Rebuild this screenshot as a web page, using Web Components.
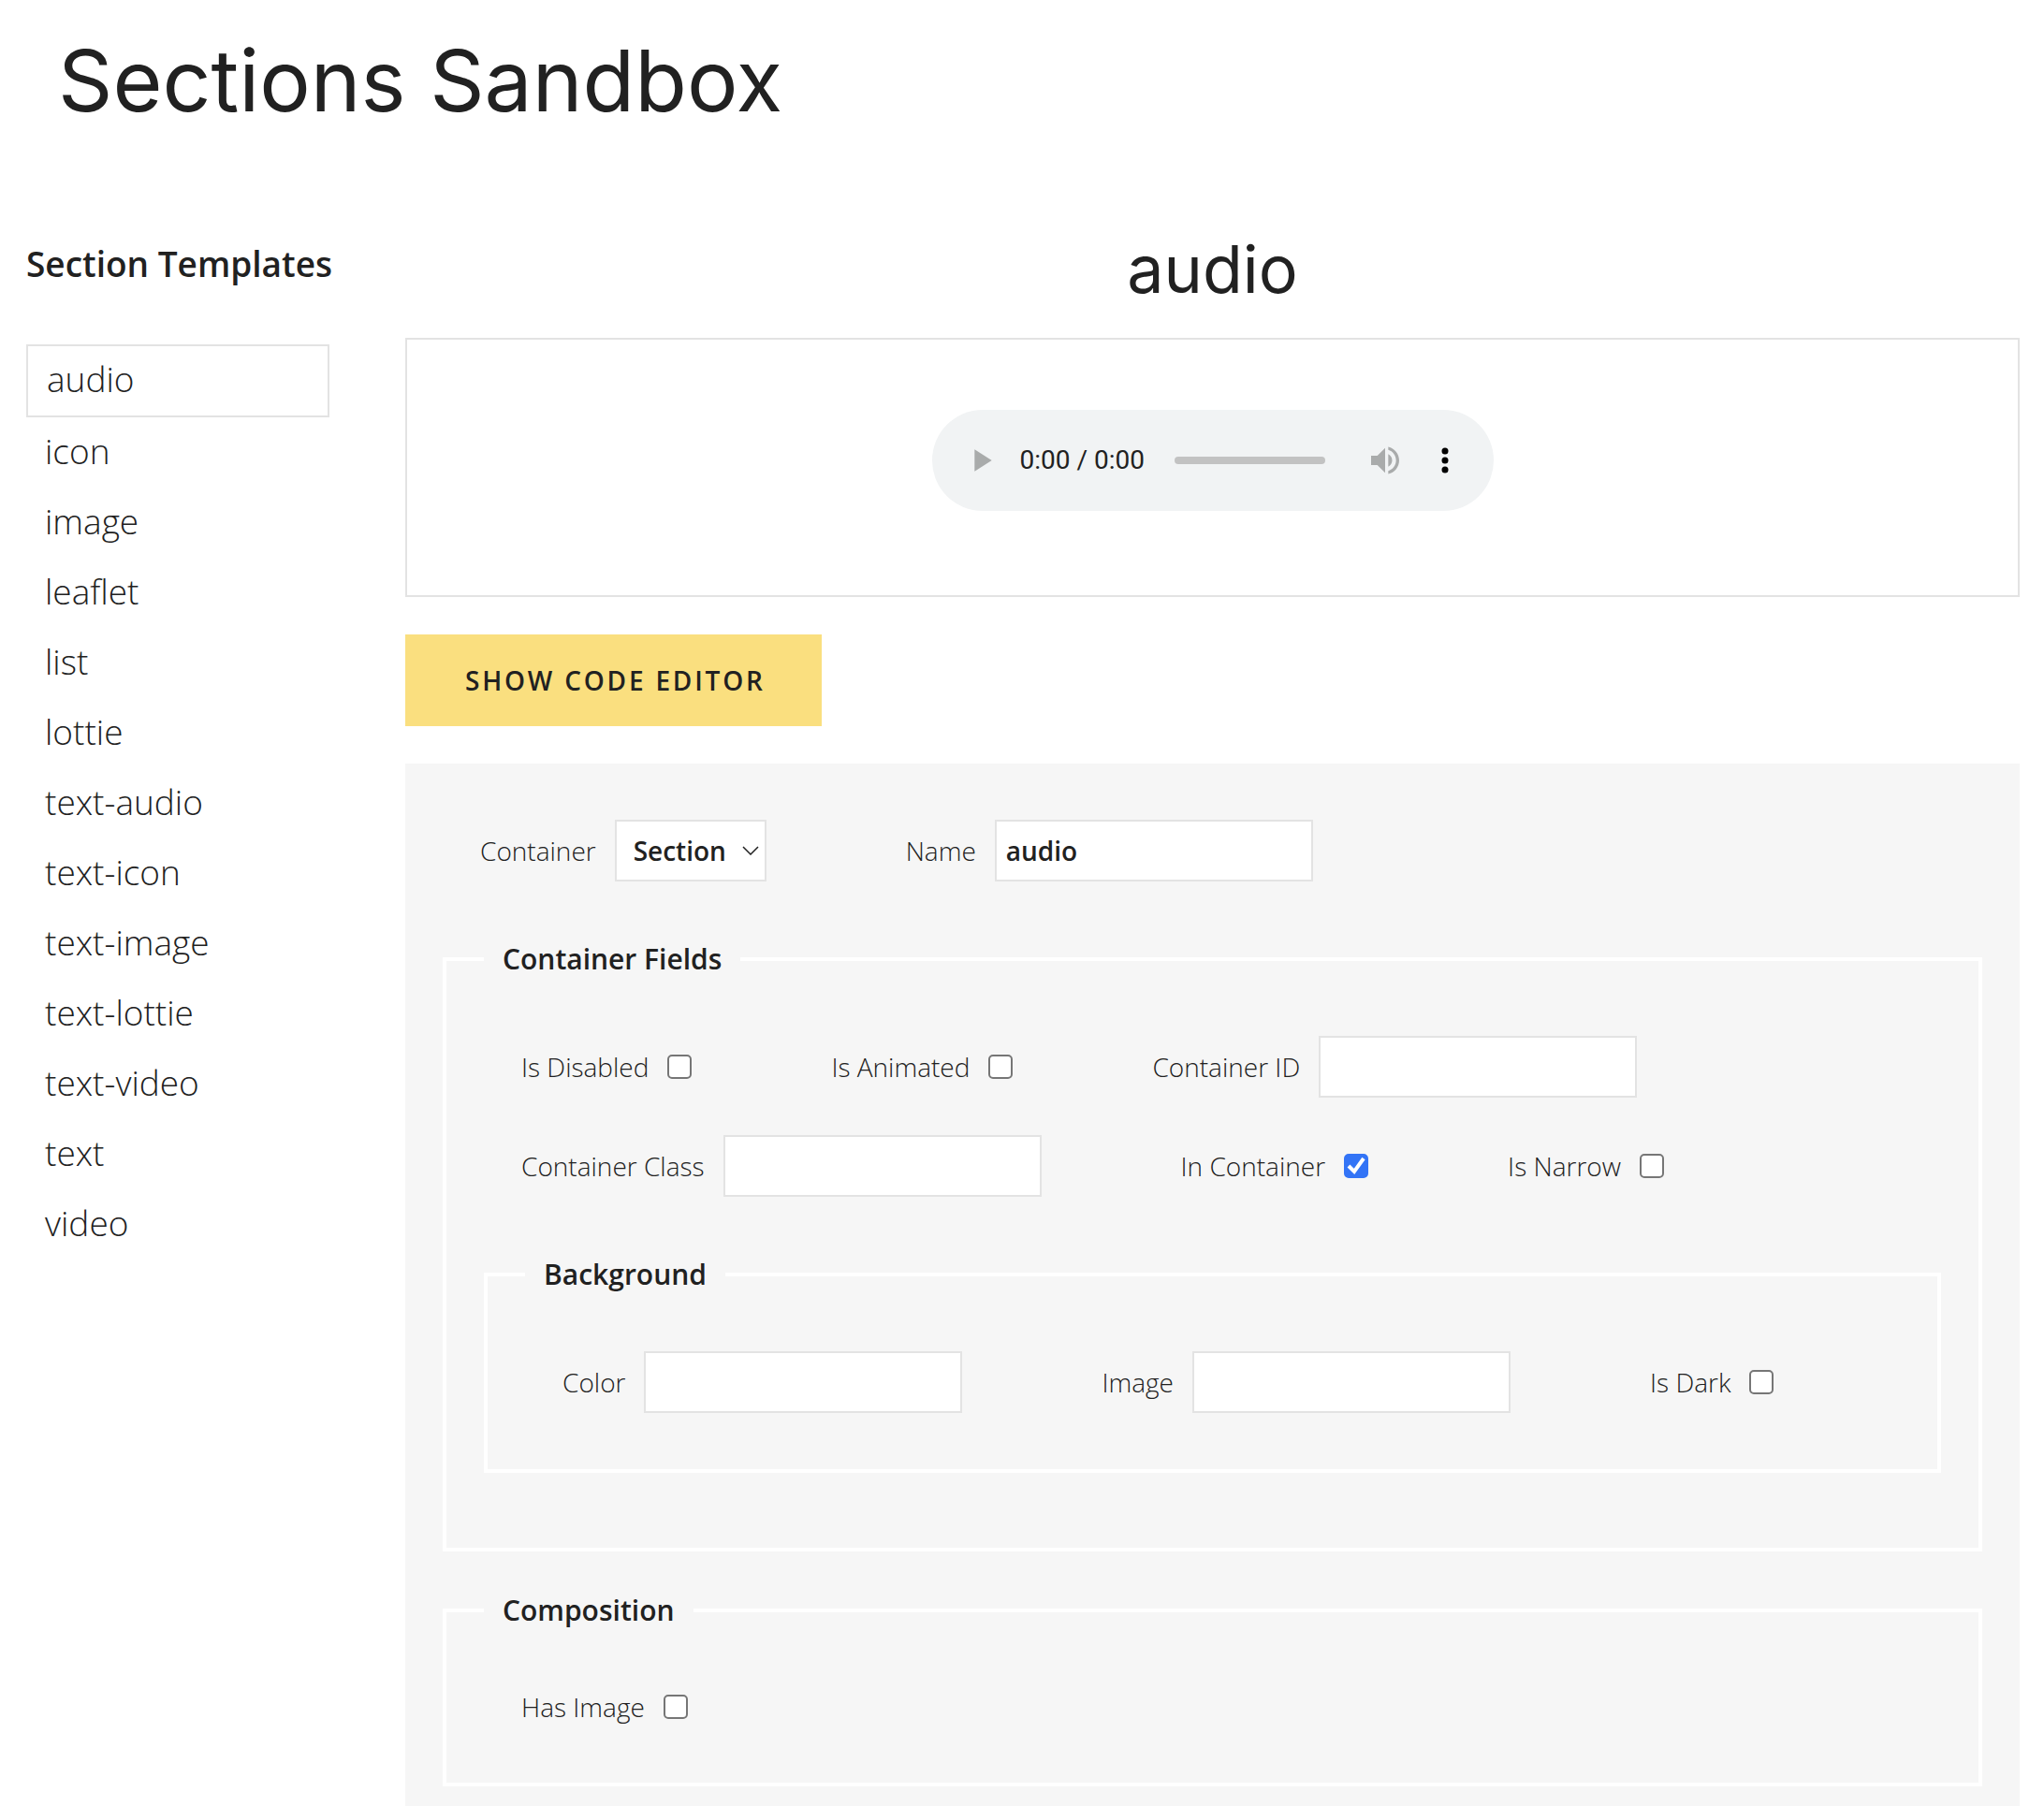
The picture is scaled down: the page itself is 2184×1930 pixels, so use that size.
<!DOCTYPE html>
<html lang="en">
<head>
<meta charset="utf-8">
<meta name="viewport" content="width=device-width, initial-scale=1">
<title>Sections Sandbox</title>
<style>
  html { background: #fff; }
  body { margin: 0; min-height: 100vh; display: flex; flex-direction: column; font-family: "Open Sans", sans-serif; font-size: 28px; font-weight: 300; line-height: 42px; color: #212121; }
  sandbox-app { flex: 1; }
</style>
</head>
<body>
<sandbox-app>
  <template-nav slot="nav" heading="Section Templates" current="audio" items="audio,icon,image,leaflet,list,lottie,text-audio,text-icon,text-image,text-lottie,text-video,text,video"></template-nav>
  <section-preview heading="audio"><audio-player></audio-player></section-preview>
  <code-button>Show code editor</code-button>
  <section-form>
    <field-row>
      <select-field label="Container" options="Section,Article,Aside"></select-field>
      <text-field label="Name" value="audio"></text-field>
    </field-row>
    <field-group legend="Container Fields">
      <field-row>
        <check-field label="Is Disabled"></check-field>
        <check-field label="Is Animated"></check-field>
        <text-field label="Container ID"></text-field>
        <text-field label="Container Class"></text-field>
        <check-field label="In Container" checked></check-field>
        <check-field label="Is Narrow"></check-field>
      </field-row>
      <field-group legend="Background" nested>
        <field-row>
          <text-field label="Color"></text-field>
          <text-field label="Image"></text-field>
          <check-field label="Is Dark"></check-field>
        </field-row>
      </field-group>
    </field-group>
    <field-group legend="Composition">
      <field-row>
        <check-field label="Has Image"></check-field>
      </field-row>
    </field-group>
  </section-form>
</sandbox-app>

<script>
class Base extends HTMLElement {
  connectedCallback() {
    if (this.shadowRoot) return;
    this.attachShadow({ mode: "open" }).innerHTML =
      `<style>:host,*{box-sizing:border-box}${this.css()}</style>${this.html()}`;
  }
  attr(name) { return this.getAttribute(name) || ""; }
}

customElements.define("sandbox-app", class extends Base {
  css() { return `
    :host { display: flex; flex-direction: column; }
    header { padding: 34px 62px 102px; }
    h1 { margin: 0; font: 400 91px/104px Inter, sans-serif; }
    .columns { flex: 1; display: flex; gap: 81px; padding: 0 26px 0 28px; }
    main { flex: 1; min-width: 0; display: flex; flex-direction: column; }`; }
  html() { return `
    <header><h1>Sections Sandbox</h1></header>
    <div class="columns"><slot name="nav"></slot><main><slot></slot></main></div>`; }
});

customElements.define("template-nav", class extends Base {
  css() { return `
    :host { display: block; flex: none; width: 324px; padding-top: 14px; font-size: 37px; line-height: 56px; }
    h2 { margin: 0 0 58px; font-size: inherit; font-weight: 600; white-space: nowrap; }
    ul { display: flex; flex-direction: column; gap: 1px; margin: 0; padding: 0; list-style: none; }
    a { display: block; padding: 7px 20px 11px; color: inherit; text-decoration: none; }
    a[aria-current] { border: 2px solid #e3e3e3; }`; }
  html() {
    const current = this.attr("current");
    return `<h2>${this.attr("heading")}</h2><nav><ul>${this.attr("items").split(",").map(item =>
      `<li><a href="#${item}"${item === current ? ' aria-current="page"' : ""}>${item}</a></li>`).join("")}</ul></nav>`;
  }
});

customElements.define("section-preview", class extends Base {
  css() { return `
    :host { display: block; }
    h2 { margin: 0 0 25px; text-align: center; font: 400 70px/96px Inter, sans-serif; }
    div { display: flex; justify-content: center; padding: 75px 20px 90px; border: 2px solid #e3e3e3; }`; }
  html() { return `<h2>${this.attr("heading")}</h2><div><slot></slot></div>`; }
});

customElements.define("audio-player", class extends Base {
  css() { return `
    :host { display: flex; align-items: center; width: 600px; height: 108px; padding: 0 32px; border-radius: 54px; background: #f1f3f4; font: 400 28px/42px Roboto, sans-serif; }
    button { display: block; padding: 0; border: 0; background: none; color: #000; }
    button:disabled { color: #a9abab; }
    svg { display: block; width: 40px; height: 40px; fill: currentColor; }
    span { margin: 0 32px 0 22px; white-space: nowrap; }
    .track { flex: 1; height: 8px; border-radius: 4px; background: #c2c2c2; }
    .volume { margin: 0 24px 0 44px; }`; }
  html() { return `
    <button disabled aria-label="play"><svg viewBox="0 0 24 24"><path d="M8 5v14l11-7z"/></svg></button>
    <span>0:00 / 0:00</span>
    <div class="track"></div>
    <button class="volume" disabled aria-label="mute"><svg viewBox="0 0 24 24"><path d="M3 9v6h4l5 5V4L7 9H3zm13.500 3c0-1.770-1.020-3.290-2.500-4.030v8.050c1.480-.73 2.500-2.250 2.500-4.020zM14 3.230v2.060c2.890.86 5 3.540 5 6.710s-2.110 5.850-5 6.710v2.060c4.010-.91 7-4.490 7-8.770s-2.990-7.860-7-8.770z"/></svg></button>
    <button aria-label="more options"><svg viewBox="0 0 24 24"><circle cx="12" cy="6" r="2.100"/><circle cx="12" cy="12" r="2.100"/><circle cx="12" cy="18" r="2.100"/></svg></button>`; }
});

customElements.define("code-button", class extends Base {
  css() { return `
    :host { display: block; padding: 40px 0; }
    button { display: block; padding: 28px 60px 28px 64px; border: 0; background: #fadf7f; color: inherit; font: inherit; font-weight: 600; letter-spacing: .1em; text-transform: uppercase; }`; }
  html() { return `<button type="button"><slot></slot></button>`; }
});

customElements.define("section-form", class extends Base {
  css() { return `
    :host { flex: 1; display: flex; background: #f6f6f6; }
    form { flex: 1; min-width: 0; display: flex; flex-direction: column; padding: 0 40px 20px; }`; }
  html() { return `<form><slot></slot></form>`; }
});

customElements.define("field-row", class extends Base {
  css() { return `
    :host { display: flex; flex-wrap: wrap; align-items: center; gap: 40px 149px; padding: 60px 40px; }`; }
  html() { return `<slot></slot>`; }
});

customElements.define("field-group", class extends Base {
  css() { return `
    :host { display: block; }
    fieldset { min-width: 0; margin: 0 0 40px; padding: 0 40px; border: 4px solid #fff; }
    :host([nested]) fieldset { margin-bottom: 80px; }
    :host(:last-child:not([nested])) fieldset { margin-bottom: 0; }
    legend { padding: 0 20px; font-size: 30px; line-height: 45px; font-weight: 600; }`; }
  html() { return `<fieldset><legend>${this.attr("legend")}</legend><slot></slot></fieldset>`; }
});

const fieldCss = `
  :host { display: flex; align-items: center; gap: 20px; }
  label { white-space: nowrap; }
  input, select { margin: 0; color: inherit; font: inherit; font-weight: 600; border: 2px solid #e3e3e3; border-radius: 0; background: #fff; }`;

customElements.define("text-field", class extends Base {
  css() { return fieldCss + `input { width: 340px; height: 66px; padding: 0 10px; }`; }
  html() { return `<label for="f">${this.attr("label")}</label><input id="f" type="text" value="${this.attr("value")}">`; }
});

customElements.define("select-field", class extends Base {
  css() { return fieldCss + `
    div { display: grid; align-items: center; }
    select, svg { grid-area: 1 / 1; }
    select { appearance: none; width: 162px; height: 66px; padding: 0 40px 0 18px; }
    svg { justify-self: end; margin-right: 8px; width: 18px; height: 10px; fill: none; stroke: #212121; stroke-width: 1.500; pointer-events: none; }`; }
  html() { return `<label for="f">${this.attr("label")}</label><div><select id="f">${this.attr("options").split(",").map(o => `<option>${o}</option>`).join("")}</select><svg viewBox="0 0 18 10"><path d="M1 1l8 8 8-8"/></svg></div>`; }
});

customElements.define("check-field", class extends Base {
  css() { return fieldCss + `
    div { display: grid; }
    input, svg { grid-area: 1 / 1; width: 26px; height: 26px; }
    input { appearance: none; border: 2px solid #767676; border-radius: 5px; }
    input:checked { border-color: #3374f6; background: #3374f6; }
    svg { display: none; fill: none; stroke: #fff; stroke-width: 4; pointer-events: none; }
    input:checked + svg { display: block; }`; }
  html() { return `<label for="f">${this.attr("label")}</label><div><input id="f" type="checkbox"${this.hasAttribute("checked") ? " checked" : ""}><svg viewBox="0 0 26 26"><path d="M5 13l6 6L21 5"/></svg></div>`; }
});
</script>
</body>
</html>
